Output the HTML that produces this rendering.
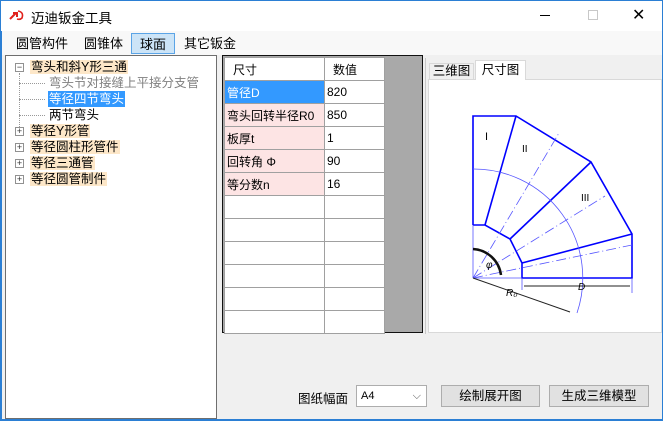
<!DOCTYPE html>
<html><head><meta charset="utf-8"><style>
*{margin:0;padding:0;box-sizing:border-box}
body{width:663px;height:421px;overflow:hidden;background:#f0f0f0;font-family:"Liberation Sans","Noto Sans CJK SC",sans-serif;font-size:12px;color:#000;position:relative}
.a{position:absolute}
.win{left:0;top:0;width:663px;height:421px;border:1px solid #2b7fd4;border-left-width:2px;border-bottom-width:2px}
.title{left:1px;top:1px;width:661px;height:30px;background:#fff}
.menu{left:2px;top:31px;width:660px;height:24px;background:#f8f8f8}
.mi{top:33px;height:21px;line-height:21px;font-size:13px;padding:0 4px}
.tree{left:5px;top:55px;width:212px;height:364px;background:#fff;border:1px solid #6e6e6e}
.tn{position:absolute;height:16px;line-height:16px;font-size:12.5px;white-space:nowrap}
.hl{background:#fde7c8;padding:0 1px}
.pm{position:absolute;width:9px;height:9px;border:1px solid #919191;background:#fff;font-size:9px;line-height:6px;text-align:center;color:#333}
.grid{left:222px;top:55px;width:201px;height:278px;border:1px solid #111;background:#a9a9a9}
.grid table{border-collapse:collapse;position:absolute;left:1px;top:1px;width:161px;background:#fff}
.grid td{border:1px solid #a0a0a0;height:23px;font-size:12px;padding-left:2px;white-space:nowrap}
.pk{background:#fde4e4}
.tabs{left:425px;top:58px;width:237px;height:276px;border-left:1px solid #c8c8c8}
.btn{top:385px;height:22px;border:1px solid #adadad;background:#e1e1e1;text-align:center;line-height:20px;font-size:12.5px}
</style></head><body>
<div class="a win"></div>
<div class="a title"></div>
<svg class="a" style="left:9px;top:9px" width="16" height="12"><path d="M1,10 L7,4 M4,4 L8,4 L8,8" stroke="#e0201b" stroke-width="2" fill="none"/><path d="M9,2 Q15,3 13,9 Q11,11 8,10" stroke="#e0201b" stroke-width="1.6" fill="none"/></svg>
<div class="a" style="left:31px;top:7px;font-size:13.5px">迈迪钣金工具</div>
<div class="a" style="left:540px;top:15px;width:10px;border-top:1px solid #000"></div>
<div class="a" style="left:588px;top:10px;width:10px;height:10px;border:1px solid #c8c8c8"></div>
<div class="a" style="left:632px;top:5px;font-size:16px">✕</div>
<div class="a menu"></div>
<div class="a mi" style="left:12px">圆管构件</div>
<div class="a mi" style="left:80px">圆锥体</div>
<div class="a mi" style="left:131px;top:33px;width:44px;background:#cce4f7;border:1px solid #5ba4e6;text-align:center;padding:0">球面</div>
<div class="a mi" style="left:180px">其它钣金</div>

<div class="a tree">
 <div class="pm" style="left:9px;top:7px">−</div>
 <div class="tn" style="left:24px;top:3px"><span class="hl">弯头和斜Y形三通</span></div>
 <div class="a" style="left:13px;top:17px;height:58px;border-left:1px dotted #999"></div>
 <div class="a" style="left:13px;top:27px;width:26px;border-top:1px dotted #999"></div>
 <div class="a" style="left:13px;top:43px;width:26px;border-top:1px dotted #999"></div>
 <div class="a" style="left:13px;top:59px;width:26px;border-top:1px dotted #999"></div>
 <div class="tn" style="left:43px;top:19px;color:#808080">弯头节对接缝上平接分支管</div>
 <div class="tn" style="left:42px;top:35px;background:#3399ff;color:#fff;padding:0 1px">等径四节弯头</div>
 <div class="tn" style="left:43px;top:51px">两节弯头</div>
 <div class="pm" style="left:9px;top:71px">+</div><div class="tn" style="left:24px;top:67px"><span class="hl">等径Y形管</span></div>
 <div class="pm" style="left:9px;top:87px">+</div><div class="tn" style="left:24px;top:83px"><span class="hl">等径圆柱形管件</span></div>
 <div class="pm" style="left:9px;top:103px">+</div><div class="tn" style="left:24px;top:99px"><span class="hl">等径三通管</span></div>
 <div class="pm" style="left:9px;top:119px">+</div><div class="tn" style="left:24px;top:115px"><span class="hl">等径圆管制件</span></div>
</div>

<div class="a grid"><table>
<tr><td style="width:100px;height:21px;padding-left:8px">尺寸</td><td style="padding-left:8px">数值</td></tr>
<tr><td style="background:#3399ff;color:#fff">管径D</td><td>820</td></tr>
<tr><td class="pk">弯头回转半径R0</td><td>850</td></tr>
<tr><td class="pk">板厚t</td><td>1</td></tr>
<tr><td class="pk">回转角 Φ</td><td>90</td></tr>
<tr><td class="pk">等分数n</td><td>16</td></tr>
<tr><td></td><td></td></tr><tr><td></td><td></td></tr><tr><td></td><td></td></tr>
<tr><td></td><td></td></tr><tr><td></td><td></td></tr><tr><td style="height:21px"></td><td></td></tr>
</table></div>

<div class="a tabs">
 <div class="a" style="left:2px;top:21px;width:234px;height:254px;background:#fff;border:1px solid #d9d9d9"></div>
 <div class="a" style="left:3px;top:5px;width:45px;height:17px;border:1px solid #d9d9d9;background:#f0f0f0;text-align:center;line-height:15px;font-size:12.5px">三维图</div>
 <div class="a" style="left:49px;top:2px;width:51px;height:20px;border:1px solid #d9d9d9;border-bottom:none;background:#fff;text-align:center;line-height:18px;font-size:12.5px">尺寸图</div>
</div>
<svg class="a" style="left:0;top:0" width="663" height="421">
<g fill="none" stroke="#00f" stroke-width="1.6">
<polyline points="473,225 473,116 516,116 591,162 632,234 632,278 522,278 522,263 510,239 485,225 473,225"/>
<line x1="485" y1="225" x2="516" y2="116"/><line x1="510" y1="239" x2="591" y2="162"/><line x1="522" y1="263" x2="632" y2="234"/>
</g>
<g stroke="#55f" stroke-width="0.8" fill="none">
<path d="M473,169 A109,109 0 0 1 577,313"/>
<line x1="473" y1="278" x2="559" y2="133" stroke-dasharray="10,3,1,3"/>
<line x1="473" y1="278" x2="605" y2="196" stroke-dasharray="10,3,1,3"/>
<line x1="473" y1="278" x2="632" y2="245" stroke-dasharray="10,3,1,3"/>
<line x1="473" y1="278" x2="473" y2="225"/><line x1="473" y1="278" x2="522" y2="278"/>
<line x1="522" y1="278" x2="522" y2="290"/><line x1="632" y1="278" x2="632" y2="293"/>
</g>
<path d="M473,249 A30,30 0 0 1 501,275" stroke="#111" stroke-width="2.5" fill="none"/>
<line x1="473" y1="278" x2="570" y2="312" stroke="#222" stroke-width="1"/>
<line x1="524" y1="286" x2="630" y2="286" stroke="#222" stroke-width="1"/>
<text x="485" y="140" font-size="11">I</text><text x="522" y="152" font-size="10">II</text><text x="581" y="201" font-size="10">III</text>
<text x="486" y="268" font-size="10" font-style="italic">φ</text>
<text x="506" y="296" font-size="10" font-style="italic">R₀</text><text x="578" y="290" font-size="10" font-style="italic">D</text>
</svg>

<div class="a" style="left:298px;top:388px;font-size:12.5px">图纸幅面</div>
<div class="a" style="left:356px;top:385px;width:71px;height:22px;border:1px solid #adadad;background:#fff;font-size:11px;line-height:20px;padding-left:4px">A4<span style="position:absolute;right:5px;top:0;color:#555">⌵</span></div>
<div class="a btn" style="left:441px;width:99px">绘制展开图</div>
<div class="a btn" style="left:549px;width:100px">生成三维模型</div>
</body></html>
